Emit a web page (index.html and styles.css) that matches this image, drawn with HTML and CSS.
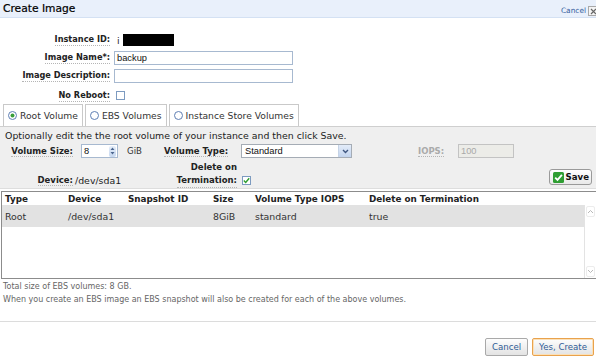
FILE: index.html
```html
<!DOCTYPE html>
<html>
<head>
<meta charset="utf-8">
<title>Create Image</title>
<link rel="stylesheet" href="styles.css">
</head>
<body>
<div class="titlebar">
  <span class="title">Create Image</span>
  <span class="close">
    <a class="cancel-link">Cancel</a>
    <span class="xbox"><svg width="7" height="7" viewBox="0 0 7 7"><path d="M1 1L6 6M6 1L1 6" stroke="#666" stroke-width="1.2"/></svg></span>
  </span>
</div>

<div class="form">
  <div class="lbl help">Instance ID:</div>
  <div class="val"><span class="iid">i</span><span class="redact"></span></div>
  <div class="lbl help">Image Name*:</div>
  <div class="val"><span class="field wide">backup</span></div>
  <div class="lbl help">Image Description:</div>
  <div class="val"><span class="field wide"></span></div>
  <div class="lbl help">No Reboot:</div>
  <div class="val"><span class="check"></span></div>
</div>

<div class="tabs">
  <div class="tab"><svg class="radio" width="9" height="9" viewBox="0 0 9 9"><circle cx="4.5" cy="4.5" r="4" fill="#fff" stroke="#5f7fb3"/><circle cx="4.5" cy="4.5" r="2" fill="#3a9e3a"/></svg>Root Volume</div>
  <div class="tab"><svg class="radio" width="9" height="9" viewBox="0 0 9 9"><circle cx="4.5" cy="4.5" r="4" fill="#fff" stroke="#5f7fb3"/></svg>EBS Volumes</div>
  <div class="tab"><svg class="radio" width="9" height="9" viewBox="0 0 9 9"><circle cx="4.5" cy="4.5" r="4" fill="#fff" stroke="#5f7fb3"/></svg>Instance Store Volumes</div>
</div>

<div class="panel">
  <div class="intro">Optionally edit the the root volume of your instance and then click Save.</div>

  <div class="plbl"><span class="help">Volume Size:</span></div>
  <div class="pval">
    <span class="field num">8<span class="spin"><svg width="5" height="10" viewBox="0 0 5 10"><path d="M0.5 4L2.5 1.5L4.5 4Z M0.5 6L2.5 8.5L4.5 6Z" fill="#4c6690"/></svg></span></span>
    <span class="unit">GiB</span>
  </div>
  <div class="plbl start"><span class="help">Volume Type:</span></div>
  <div class="pval"><span class="select">Standard<span class="sel-btn"><svg width="7" height="5" viewBox="0 0 7 5"><path d="M1 1L3.5 3.5L6 1" fill="none" stroke="#3f5680" stroke-width="1.4"/></svg></span></span></div>
  <div class="plbl start dis"><span class="help">IOPS:</span></div>
  <div class="pval"><span class="field iops">100</span></div>
  <div></div>

  <div class="plbl bottom"><span class="help">Device:</span></div>
  <div class="pval bottom devval">/dev/sda1</div>
  <div class="plbl term"><span>Delete on</span><span class="help">Termination:</span></div>
  <div class="pval bottom"><span class="check on"><svg width="7" height="7" viewBox="0 0 7 7"><path d="M0.8 3.6L2.7 5.5L6.2 1.2" fill="none" stroke="#2f9e2f" stroke-width="1.4"/></svg></span></div>
  <div></div>
  <div></div>
  <div class="savecell"><span class="savebtn"><svg width="11" height="11" viewBox="0 0 11 11"><rect x="0" y="0" width="11" height="11" rx="1.5" fill="#2f9e33"/><path d="M2.2 5.6L4.5 7.9L8.9 2.8" fill="none" stroke="#fff" stroke-width="1.8"/></svg>Save</span></div>
</div>

<div class="vtable">
  <div class="thead">
    <div>Type</div><div>Device</div><div>Snapshot ID</div><div>Size</div><div>Volume Type IOPS</div><div>Delete on Termination</div>
  </div>
  <div class="tbody">
    <div class="rows">
      <div class="trow">
        <div>Root</div><div>/dev/sda1</div><div></div><div>8GiB</div><div>standard</div><div>true</div>
      </div>
    </div>
    <div class="scrollbar">
      <span class="sarrow"><svg width="7" height="5" viewBox="0 0 7 5"><path d="M1 4L3.5 1.5L6 4" fill="none" stroke="#b8b8b8" stroke-width="1"/></svg></span>
      <span class="sarrow"><svg width="7" height="5" viewBox="0 0 7 5"><path d="M1 1L3.5 3.5L6 1" fill="none" stroke="#b8b8b8" stroke-width="1"/></svg></span>
    </div>
  </div>
</div>

<div class="notes">
  <p>Total size of EBS volumes: 8 GB.</p>
  <p>When you create an EBS image an EBS snapshot will also be created for each of the above volumes.</p>
</div>

<div class="actions">
  <span class="btn">Cancel</span>
  <span class="btn primary">Yes, Create</span>
</div>
</body>
</html>
```

FILE: styles.css
```css
* { box-sizing: border-box; }

body {
  margin: 0;
  width: 596px;
  height: 358px;
  overflow: hidden;
  background: #fff;
  color: #222;
  font-family: "DejaVu Sans", Verdana, sans-serif;
  font-size: 9.4px;
}

/* title bar */
.titlebar {
  height: 18px;
  background: #e9f0fb;
  border-bottom: 1px solid #d4e1f3;
  display: flex;
  justify-content: space-between;
  align-items: flex-end;
  padding-left: 3px;
}
.title {
  align-self: center;
  font-size: 10.7px;
  line-height: 14px;
  color: #000;
  -webkit-text-stroke: 0.2px #000;
}
.close {
  display: flex;
  align-items: center;
  gap: 2px;
  padding-bottom: 1px;
  margin-right: -2px;
}
.cancel-link {
  font-size: 7.4px;
  line-height: 10px;
  color: #35609e;
}
.xbox {
  width: 10px;
  height: 10px;
  border: 1px solid #a8a8a8;
  background: #f4f4f4;
  display: flex;
  align-items: center;
  justify-content: center;
}

/* top form */
.form {
  display: grid;
  grid-template-columns: 110px 1fr;
  grid-template-rows: 14px 14px 14px 17px;
  column-gap: 4px;
  row-gap: 4px;
  padding-top: 15px;
  align-items: center;
}
.lbl {
  justify-self: end;
  font-weight: bold;
  font-size: 8.2px;
  line-height: 11px;
}
.help { border-bottom: 1px dotted #b5b5b5; }
.val { display: flex; align-items: center; }
.iid { margin-left: 3px; margin-right: 3px; }
.redact {
  display: inline-block;
  width: 51px;
  height: 12px;
  background: #000;
}
.field {
  display: inline-flex;
  align-items: center;
  height: 14px;
  border: 1px solid #a7b9d0;
  background: #fff;
  padding: 0 2px;
  font-family: "Liberation Sans", Arial, sans-serif;
  font-size: 9.3px;
  color: #111;
}
.field.wide { width: 179px; }
.check {
  display: inline-flex;
  align-items: center;
  justify-content: center;
  width: 9px;
  height: 9px;
  border: 1px solid #7d9bc0;
  background: #fff;
  margin-left: 2px;
}

/* tabs */
.tabs {
  display: flex;
  gap: 2px;
  margin-left: 3px;
  height: 22px;
}
.tab {
  display: flex;
  align-items: center;
  gap: 3px;
  padding: 0 4px;
  border: 1px solid #c9c9c9;
  border-bottom: none;
  background: #fff;
  font-size: 9.2px;
  color: #333;
}

/* root volume panel */
.panel {
  background: #efefef;
  border-top: 1px solid #cfcfcf;
  border-bottom: 1px solid #dedede;
  padding: 3px 0 1px;
  display: grid;
  grid-template-columns: 75px 89px 77px 177px 40px 56px 1fr;
  grid-template-rows: 11px 14px 26px;
  row-gap: 3px;
  align-items: center;
}
.intro {
  grid-column: 1 / -1;
  padding-left: 5px;
  line-height: 11px;
  color: #222;
}
.plbl {
  justify-self: end;
  font-weight: bold;
  font-size: 8.5px;
  line-height: 12px;
  padding-right: 2px;
}
.plbl.start { justify-self: start; }
.plbl.dis { color: #aaa; }
.plbl.bottom, .pval.bottom { align-self: end; }
.plbl.bottom { line-height: 13px; }
.devval { line-height: 13px; }
.plbl.term {
  display: flex;
  flex-direction: column;
  align-items: flex-end;
  line-height: 13px;
  padding-right: 4px;
  font-size: 8.5px;
}
.pval { display: flex; align-items: center; }
.pval.bottom .check { margin: 0 0 2px 1px; }
.field.num {
  width: 37px;
  margin-left: 6px;
  justify-content: space-between;
  padding-right: 1px;
}
.spin {
  width: 7px;
  height: 11px;
  border-radius: 2px;
  background: linear-gradient(#e4edf9, #c6d7ef);
  display: flex;
  align-items: center;
  justify-content: center;
}
.unit { margin-left: 9px; font-size: 8.6px; color: #333; }
.select {
  display: inline-flex;
  align-items: center;
  justify-content: space-between;
  width: 111px;
  height: 14px;
  border: 1px solid #a5acb5;
  background: #fff;
  padding-left: 3px;
  font-family: "Liberation Sans", Arial, sans-serif;
  font-size: 9.3px;
  color: #111;
}
.sel-btn {
  width: 13px;
  height: 12px;
  background: linear-gradient(#e3ecf9, #c3d4ee);
  border-left: 1px solid #c5d3e6;
  display: flex;
  align-items: center;
  justify-content: center;
}
.field.iops {
  width: 56px;
  background: #ecece8;
  border-color: #c3c3c3;
  color: #a9a9a9;
}
.savecell {
  justify-self: end;
  align-self: end;
  margin: 0 4px 2px 0;
}
.savebtn {
  display: inline-flex;
  align-items: center;
  gap: 2px;
  height: 16px;
  padding: 0 2px 0 3px;
  border: 1px solid #9a9a9a;
  border-radius: 3px;
  background: linear-gradient(#ffffff, #e9e9e9);
  font-weight: bold;
  font-size: 8.6px;
  color: #111;
}

/* volumes table */
.vtable {
  margin: 2px 0 0 1px;
  border: 1px solid #8c8c8c;
  border-right: none;
}
.thead, .trow {
  display: grid;
  grid-template-columns: 63px 60px 85px 42px 114px 1fr;
  align-items: center;
}
.thead div, .trow div { padding-left: 3px; white-space: nowrap; }
.thead {
  height: 13px;
  font-weight: bold;
  font-size: 8.8px;
  color: #222;
}
.tbody {
  display: flex;
  height: 73px;
}
.rows { flex: 1; }
.trow {
  height: 22px;
  background: #e2e2e2;
  color: #333;
}
.scrollbar {
  width: 12px;
  border-left: 1px solid #e3e3e3;
  background: #fff;
  display: flex;
  flex-direction: column;
  justify-content: space-between;
  padding: 1px 0;
}
.sarrow {
  height: 11px;
  display: flex;
  align-items: center;
  justify-content: center;
  border: 1px solid #ececec;
  border-radius: 2px;
  margin: 0 1px;
}

/* notes */
.notes {
  padding: 1px 0 0 3px;
  font-size: 8px;
  color: #666;
}
.notes p {
  margin: 0;
  line-height: 13px;
}

/* bottom buttons */
.actions {
  margin-top: 15px;
  border-top: 1px solid #dcdcdc;
  padding: 16px 2px 0 0;
  display: flex;
  justify-content: flex-end;
  gap: 4px;
}
.btn {
  display: inline-flex;
  align-items: center;
  height: 18px;
  padding: 0 6px;
  border: 1px solid #a9a9a9;
  border-radius: 2px;
  background: linear-gradient(#fdfdfd, #e3e3e3);
  font-size: 8.6px;
  color: #2f5c97;
}
.btn.primary {
  border-color: #e9a24c;
  box-shadow: inset 0 0 0 1px #fbe0b8;
}
```
